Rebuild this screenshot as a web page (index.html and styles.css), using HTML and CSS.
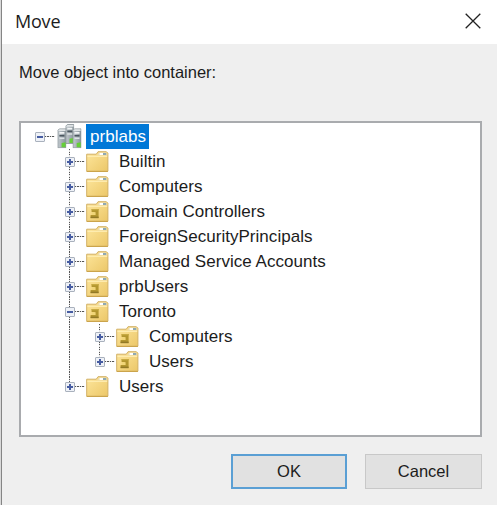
FILE: index.html
```html
<!DOCTYPE html>
<html lang="en">
<head>
<meta charset="utf-8">
<title>Move</title>
<link rel="stylesheet" href="styles.css">
</head>
<body>
<svg class="defs" width="0" height="0" aria-hidden="true">
  <defs>
    <linearGradient id="gold" x1="0" y1="0" x2="1" y2="1"><stop offset="0" stop-color="#fde69c"/><stop offset="1" stop-color="#ecc768"/></linearGradient>
    <linearGradient id="steel" x1="0" y1="0" x2="1" y2="0"><stop offset="0" stop-color="#c3cacf"/><stop offset="1" stop-color="#89949b"/></linearGradient>
    <symbol id="folder" viewBox="0 0 23 22">
      <path d="M.7 20.2V3.2h9.6L12 .7h8.4l1.5 1.5v18z" fill="url(#gold)" stroke="#d2b065"/>
      <path d="M11.3 4.6L13 1.6h7.2l1.1 1.1v1.9z" fill="#ecdcae"/>
      <path d="M13.6 3h3.4" stroke="#fff" stroke-width="2"/><path d="M17 3h3.2" stroke="#8fa9b2" stroke-width="2"/>
      <path d="M1.4 5.3h19.8" stroke="#fff0b8"/>
      <path d="M.7 20.5h21.2" stroke="#cba44c"/>
    </symbol>
    <symbol id="unit" viewBox="0 0 23 22">
      <use href="#folder" width="23" height="22"/>
      <path d="M5.6 8h7v9h-8v-3h4v-3h-3z" fill="#b3962f"/>
      <path d="M5.6 8h7v1.3h-7z" fill="#c7aa42"/>
      <path d="M5.8 11.2h3.8v2.8H5.8z" fill="#f1d678"/>
      <path d="M4.6 15.6h8v1.6h-8z" fill="#927926"/>
    </symbol>
    <symbol id="tower" viewBox="0 0 9 20">
      <path d="M.5 2L2 .5h6.5v19h-8z" fill="url(#steel)" stroke="#8b959b" stroke-width=".8"/>
      <path d="M1 2.2L2.2 .9h5.9v1.8H1z" fill="#e0e4e6"/>
      <path d="M2 4.6h5" stroke="#f2f5f6" stroke-width="1.6"/><path d="M2 7.4h5" stroke="#4b575f" stroke-width="1.6"/>
      <path d="M2 10h5" stroke="#dce2e5" stroke-width="1.6"/>
      <path d="M4.2 14.8l4-.8v5H4.2z" fill="#66cf38"/>
    </symbol>
    <symbol id="domain" viewBox="0 0 26 25">
      <use href="#tower" x="8.3" y="0" width="9" height="20"/>
      <use href="#tower" x=".3" y="4.3" width="9.2" height="20"/>
      <use href="#tower" x="15.4" y="4.3" width="9.2" height="20"/>
    </symbol>
  </defs>
</svg>
<main class="dialog">
  <header class="titlebar">
    <h1 class="title">Move</h1>
    <svg class="close" viewBox="0 0 16 16" role="img" aria-label="Close"><path d="M.7.7l14.6 14.6M15.3.7L.7 15.3"/></svg>
  </header>
  <section class="content">
    <p class="prompt">Move object into container:</p>
    <div class="tree">
      <div class="row root"><i class="toggle open"></i><i class="dots"></i><svg class="domain"><use href="#domain"/></svg><span class="label selected">prblabs</span></div>
      <ul class="branch">
        <li class="row"><i class="toggle"></i><i class="dots"></i><svg class="icon"><use href="#folder"/></svg><span class="label">Builtin</span></li>
        <li class="row"><i class="toggle"></i><i class="dots"></i><svg class="icon"><use href="#folder"/></svg><span class="label">Computers</span></li>
        <li class="row"><i class="toggle"></i><i class="dots"></i><svg class="icon"><use href="#unit"/></svg><span class="label">Domain Controllers</span></li>
        <li class="row"><i class="toggle"></i><i class="dots"></i><svg class="icon"><use href="#folder"/></svg><span class="label">ForeignSecurityPrincipals</span></li>
        <li class="row"><i class="toggle"></i><i class="dots"></i><svg class="icon"><use href="#folder"/></svg><span class="label">Managed Service Accounts</span></li>
        <li class="row"><i class="toggle"></i><i class="dots"></i><svg class="icon"><use href="#unit"/></svg><span class="label">prbUsers</span></li>
        <li>
          <div class="row"><i class="toggle open"></i><i class="dots"></i><svg class="icon"><use href="#unit"/></svg><span class="label">Toronto</span></div>
          <ul class="branch">
            <li class="row"><i class="toggle"></i><i class="dots"></i><svg class="icon"><use href="#unit"/></svg><span class="label">Computers</span></li>
            <li class="row"><i class="toggle"></i><i class="dots"></i><svg class="icon"><use href="#unit"/></svg><span class="label">Users</span></li>
          </ul>
        </li>
        <li class="row"><i class="toggle"></i><i class="dots"></i><svg class="icon"><use href="#folder"/></svg><span class="label">Users</span></li>
      </ul>
    </div>
    <div class="actions">
      <button class="button primary">OK</button>
      <button class="button">Cancel</button>
    </div>
  </section>
</main>
</body>
</html>
```
FILE: styles.css
```css
* { box-sizing: border-box; }
body { margin: 0; background: #d9d9d9; font-family: "Liberation Sans", Arial, sans-serif; color: #1c1c1c; overflow: hidden; }
.defs { display: block; }
.dialog { height: 505px; margin-left: 1px; border-left: 1px solid #858585; background: #efefef; }
.titlebar { height: 44px; background: #fff; display: flex; align-items: center; justify-content: space-between; padding: 0 16px 3px 13px; }
.title { margin: 0; font: 400 18px/24px "Open Sans", sans-serif; letter-spacing: -.2px; }
.close { width: 16px; height: 16px; fill: none; stroke: #222; stroke-width: 1.3; }
.content { padding: 18px 15px 0 17px; }
.prompt { margin: 0 0 39px; font-size: 16.5px; line-height: 20px; white-space: nowrap; }
.tree { width: 463px; height: 316px; border: 2px solid #a9abae; background: #fff; padding: 1px 0 0 14px; }
.row { display: flex; align-items: center; height: 25px; }
.toggle { flex: none; width: 10px; height: 10px; border: 1px solid #a9b1bd; border-radius: 1px; background: linear-gradient(#465ca2, #465ca2) center / 6px 2px no-repeat, linear-gradient(#465ca2, #465ca2) center / 2px 6px no-repeat, #eef1f7; position: relative; }
.toggle.open { background: linear-gradient(#465ca2, #465ca2) center / 6px 2px no-repeat, #eef1f7; }
.dots { flex: none; width: 10px; height: 1px; margin-right: 1px; background: repeating-linear-gradient(90deg, #555 0 1.3px, #e4e4e4 1.3px 2.5px); }
.domain { flex: none; width: 26px; height: 25px; margin: 0 3px 0 1px; }
.icon { flex: none; width: 23px; height: 22px; margin-right: 6px; }
.label { padding: 0 4px; font-size: 17px; line-height: 25px; letter-spacing: .03px; white-space: nowrap; }
.selected { padding-right: 3px; background: #0078d7; color: #fff; }
.branch { list-style: none; margin: 0; padding: 0 0 0 30px; position: relative; }
.branch::before { content: ""; position: absolute; left: 34px; top: 0; bottom: 12px; width: 1px; background: repeating-linear-gradient(#555 0 1.3px, #e4e4e4 1.3px 2.5px); }
.actions { display: flex; justify-content: flex-end; gap: 18px; width: 463px; margin-top: 17px; }
.button { width: 117px; height: 35px; padding: 0; border: 1px solid #c8c8c8; border-radius: 0; background: #e1e1e1; color: #1c1c1c; font: 16.5px "Liberation Sans", Arial, sans-serif; }
.primary { width: 116px; border: 2px solid #5a9fd4; }
```
